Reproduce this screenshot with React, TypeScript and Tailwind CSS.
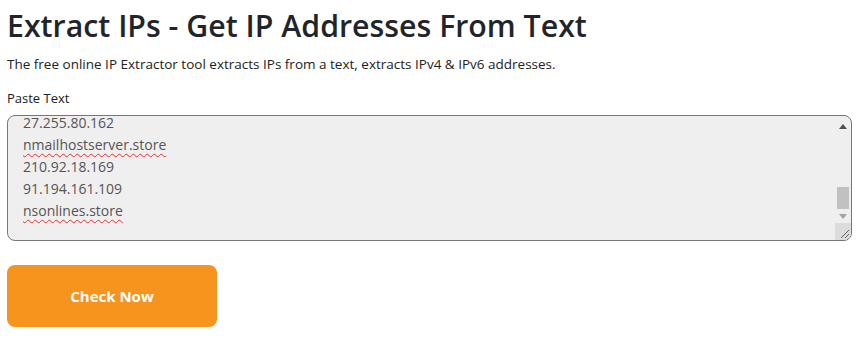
import { useEffect, useRef } from 'react'

const LINES = [
  '45.61.136.10',
  'mailhostserver.store',
  '103.41.204.7',
  '185.225.73.12',
  'nmailhostserver.store',
  '27.255.80.162',
  'nmailhostserver.store',
  '210.92.18.169',
  '91.194.161.109',
  'nsonlines.store',
]

function isDomain(line: string) {
  return /[a-z]/i.test(line)
}

function Arrow({ up, color }: { up?: boolean; color: string }) {
  return (
    <svg className="h-[5px] w-[8px]" viewBox="0 0 8 5">
      <polygon fill={color} points={up ? '0,5 8,5 4,0' : '0,0 8,0 4,5'} />
    </svg>
  )
}

function App() {
  const boxRef = useRef<HTMLDivElement>(null)

  useEffect(() => {
    const box = boxRef.current
    if (box) {
      box.scrollTop = box.scrollHeight
    }
  }, [])

  return (
    <main
      className="pl-[7px] pr-[16px] pt-[4px] text-[#212529]"
      style={{ fontFamily: '"Open Sans", "Noto Sans", sans-serif' }}
    >
      <h1 className="text-[30.3px] font-semibold leading-[44px]">
        Extract IPs - Get IP Addresses From Text
      </h1>
      <p className="mt-[6px] text-[13.5px] leading-[20px] text-[#222]">
        The free online IP Extractor tool extracts IPs from a text, extracts IPv4 &amp; IPv6 addresses.
      </p>

      <label className="mt-[14px] block text-[13px] leading-[20px] text-[#222]">
        Paste Text
      </label>
      <div className="mt-[7px] flex h-[126px] overflow-hidden rounded-[8px] border border-[#777] bg-[#efefef]">
        <div
          ref={boxRef}
          className="h-full flex-1 overflow-hidden px-[15px] pb-[18px] text-[14px] leading-[22px] text-[#555]"
        >
          {LINES.map((line, index) => (
            <div key={index}>
              {isDomain(line) ? (
                <span className="underline decoration-[#e03030] decoration-wavy decoration-1 underline-offset-[3px]">
                  {line}
                </span>
              ) : (
                line
              )}
            </div>
          ))}
        </div>
        <div className="flex w-[16px] flex-col">
          <div className="flex h-[16px] items-end justify-center pb-[3px]">
            <Arrow color="#505050" up />
          </div>
          <div className="flex flex-1 flex-col justify-end px-[2px]">
            <div className="h-[22px] bg-[#c1c1c1]" />
          </div>
          <div className="flex h-[14px] items-center justify-center">
            <Arrow color="#a3a3a3" />
          </div>
          <div className="flex h-[17px] items-end justify-end bg-[#dcdcdc] pb-[2px] pr-[2px]">
            <svg className="h-[9px] w-[9px]" viewBox="0 0 9 9">
              <line stroke="#666" strokeWidth="1" x1="1" x2="9" y1="9" y2="1" />
              <line stroke="#666" strokeWidth="1" x1="5" x2="9" y1="9" y2="5" />
            </svg>
          </div>
        </div>
      </div>

      <button
        className="mt-[24px] h-[62px] w-[210px] rounded-[8px] bg-[#f7941d] text-[15px] font-bold text-white"
        type="button"
      >
        Check Now
      </button>
    </main>
  )
}

export default App
